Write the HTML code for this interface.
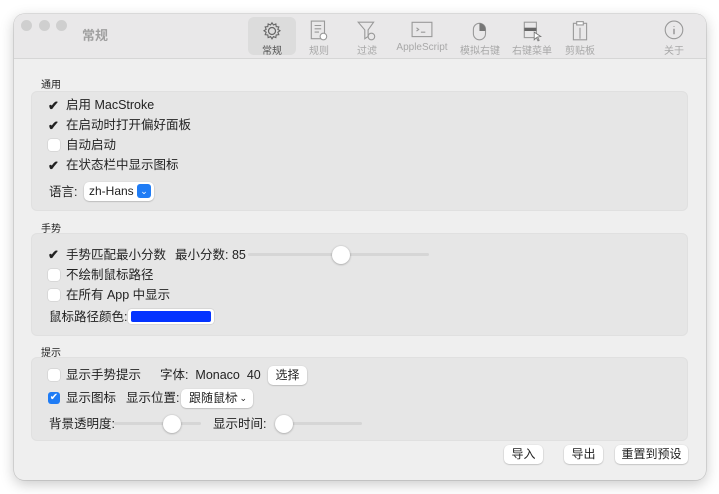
<!DOCTYPE html>
<html><head><meta charset="utf-8"><style>
*{box-sizing:border-box;margin:0;padding:0}
body{width:719px;height:494px;background:#fff;font-family:"Liberation Sans","Noto Sans CJK SC",sans-serif;font-size:12px;color:#222;position:relative;overflow:hidden}
.win{position:absolute;left:14px;top:14px;width:692px;height:466px;background:#efefef;border-radius:10px;box-shadow:0 4px 14px rgba(0,0,0,.22),0 0 0 .5px rgba(0,0,0,.2);overflow:hidden}
.tb{position:absolute;left:0;top:0;width:692px;height:45px;background:#e9e8e9;border-bottom:1px solid #d6d6d6}
.dot{position:absolute;top:6px;width:11px;height:11px;border-radius:50%;background:#cfcfcf}
.abs{position:absolute}
.tab{position:absolute;top:3px;height:38px;text-align:center;font-size:10px;color:#a8a8a8}
.tab span{position:absolute;left:0;right:0;top:25px}
.tab svg{position:absolute;left:50%;top:3px;transform:translateX(-50%)}
.box{position:absolute;left:17px;width:657px;background:#e6e6e6;border-radius:6px;border:1px solid #e0e0e0}
.lbl{position:absolute;left:27px;font-size:10px;color:#222}
.cb{position:absolute;width:12px;height:12px;border-radius:3px;background:#fff;box-shadow:0 0 0 .5px rgba(0,0,0,.12)}
.ck{position:absolute;font-size:13px;line-height:12px;font-weight:bold}
.t{position:absolute;font-size:12.5px;line-height:14px;white-space:nowrap}
.btn{position:absolute;height:19px;background:#fff;border-radius:5px;box-shadow:0 0.5px 1.5px rgba(0,0,0,.3);font-size:12px;line-height:19px;text-align:center}
.track{position:absolute;height:3px;background:#d6d6d6;border-radius:2px}
.knob{position:absolute;width:18px;height:18px;border-radius:50%;background:#fff;box-shadow:0 0.5px 2px rgba(0,0,0,.35)}
</style></head><body>
<div class="win">
 <div class="tb">
  <div class="dot" style="left:7px"></div><div class="dot" style="left:25px"></div><div class="dot" style="left:42px"></div>
  <div class="t" style="left:68px;top:15px;font-size:13px;font-weight:bold;color:#a0a0a0">常规</div>
  <div class="tab" style="left:234px;width:48px;background:#dcdcdc;border-radius:6px;color:#555"><svg width="22" height="22" viewBox="0 0 20 20"><circle cx="10" cy="10" r="3.2" fill="none" stroke="#666" stroke-width="1.1"/><path d="M10 2.5l1.3 2 2.2-.9.3 2.4 2.4.3-.9 2.2 2 1.3-2 1.3.9 2.2-2.4.3-.3 2.4-2.2-.9-1.3 2-1.3-2-2.2.9-.3-2.4-2.4-.3.9-2.2-2-1.3 2-1.3-.9-2.2 2.4-.3.3-2.4 2.2.9z" fill="none" stroke="#666" stroke-width="1"/></svg><span>常规</span></div>
  <div class="tab" style="left:290px;width:30px"><svg width="20" height="22" viewBox="0 0 18 20"><rect x="2" y="1" width="12" height="16" fill="none" stroke="#999"/><path d="M5 5h6M5 8h6M5 11h4" stroke="#999"/><circle cx="13" cy="15" r="3" fill="#fff" stroke="#999"/></svg><span>规则</span></div>
  <div class="tab" style="left:338px;width:30px"><svg width="22" height="22" viewBox="0 0 20 20"><path d="M2 2h14l-5 7v6l-3 2V9z" fill="none" stroke="#999"/><circle cx="14" cy="15" r="3" fill="none" stroke="#999"/></svg><span>过滤</span></div>
  <div class="tab" style="left:380px;width:56px"><svg width="22" height="20" viewBox="0 0 20 18"><rect x="1" y="2" width="18" height="13" fill="none" stroke="#999"/><path d="M5 7l2 1.5-2 1.5M9 11h4" stroke="#999" fill="none"/></svg><span>AppleScript</span></div>
  <div class="tab" style="left:446px;width:40px"><svg width="20" height="22" viewBox="0 0 18 20"><rect x="3" y="3" width="11" height="15" rx="5.5" fill="none" stroke="#999"/><path d="M8.5 3v7H14V8.5A5.5 5.5 0 0 0 8.5 3z" fill="#777"/></svg><span>模拟右键</span></div>
  <div class="tab" style="left:496px;width:44px"><svg width="22" height="22" viewBox="0 0 20 20"><rect x="3" y="2" width="11" height="14" fill="none" stroke="#999"/><rect x="3" y="7" width="11" height="3" fill="#666"/><path d="M12 11l6 4-3 .5 1.5 3-1 .5-1.5-3L12 18z" fill="#fff" stroke="#777" stroke-width=".8"/></svg><span>右键菜单</span></div>
  <div class="tab" style="left:548px;width:36px"><svg width="20" height="22" viewBox="0 0 18 20"><rect x="3" y="3" width="12" height="15" fill="none" stroke="#999"/><rect x="6" y="1.5" width="6" height="3" fill="#fff" stroke="#999"/><path d="M9 7v10" stroke="#999"/></svg><span>剪贴板</span></div>
  <div class="tab" style="left:645px;width:30px"><svg width="22" height="22" viewBox="0 0 20 20"><circle cx="10" cy="9" r="8" fill="none" stroke="#999"/><path d="M10 8v5M10 5.5v.5" stroke="#999" stroke-width="1.4"/></svg><span>关于</span></div>
 </div>

 <div class="lbl" style="top:62px">通用</div>
 <div class="box" style="top:77px;height:120px"></div>
 <div class="ck" style="left:34px;top:86px">✔</div><div class="t" style="left:52px;top:84px">启用 MacStroke</div>
 <div class="ck" style="left:34px;top:106px">✔</div><div class="t" style="left:52px;top:104px">在启动时打开偏好面板</div>
 <div class="cb" style="left:34px;top:125px"></div><div class="t" style="left:52px;top:124px">自动启动</div>
 <div class="ck" style="left:34px;top:146px">✔</div><div class="t" style="left:52px;top:144px">在状态栏中显示图标</div>
 <div class="t" style="left:35px;top:171px">语言:</div>
 <div class="btn" style="left:70px;top:168px;width:70px;text-align:left;padding-left:5px">zh-Hans</div>
 <div class="abs" style="left:123px;top:170px;width:14px;height:14px;background:#1f7cf5;border-radius:3px;color:#fff;font-size:9px;line-height:14px;text-align:center">⌄</div>

 <div class="lbl" style="top:206px">手势</div>
 <div class="box" style="top:219px;height:103px"></div>
 <div class="ck" style="left:34px;top:235px">✔</div><div class="t" style="left:52px;top:234px">手势匹配最小分数</div>
 <div class="t" style="left:161px;top:234px">最小分数: 85</div>
 <div class="track" style="left:234px;top:239px;width:181px"></div>
 <div class="knob" style="left:318px;top:232px"></div>
 <div class="cb" style="left:34px;top:255px"></div><div class="t" style="left:52px;top:254px">不绘制鼠标路径</div>
 <div class="cb" style="left:34px;top:275px"></div><div class="t" style="left:52px;top:274px">在所有 App 中显示</div>
 <div class="t" style="left:35px;top:296px">鼠标路径颜色:</div>
 <div class="abs" style="left:114px;top:295px;width:86px;height:15px;background:#fff;border-radius:3px;box-shadow:0 0 1px rgba(0,0,0,.4)"><div style="margin:2px 3px;height:11px;background:#0433ff;border-radius:2px"></div></div>

 <div class="lbl" style="top:330px">提示</div>
 <div class="box" style="top:343px;height:84px"></div>
 <div class="cb" style="left:34px;top:355px"></div><div class="t" style="left:52px;top:354px">显示手势提示</div>
 <div class="t" style="left:146px;top:354px">字体:&nbsp; Monaco&nbsp; 40</div>
 <div class="btn" style="left:254px;top:352px;width:39px">选择</div>
 <div class="abs" style="left:34px;top:378px;width:12px;height:12px;border-radius:3px;background:#1f7cf5;color:#fff;font-size:10px;line-height:12px;text-align:center">✔</div>
 <div class="t" style="left:52px;top:377px">显示图标</div>
 <div class="t" style="left:112px;top:377px">显示位置:</div>
 <div class="btn" style="left:167px;top:375px;width:72px;text-align:left;padding-left:8px">跟随鼠标 <span style="font-size:9px;position:absolute;right:6px">⌃⌄</span></div>
 <div class="t" style="left:35px;top:403px">背景透明度:</div>
 <div class="track" style="left:100px;top:408px;width:87px"></div>
 <div class="knob" style="left:149px;top:401px"></div>
 <div class="t" style="left:199px;top:403px">显示时间:</div>
 <div class="track" style="left:261px;top:408px;width:87px"></div>
 <div class="knob" style="left:261px;top:401px"></div>

 <div class="btn" style="left:490px;top:431px;width:39px">导入</div>
 <div class="btn" style="left:550px;top:431px;width:39px">导出</div>
 <div class="btn" style="left:601px;top:431px;width:73px">重置到预设</div>
</div>
</body></html>
